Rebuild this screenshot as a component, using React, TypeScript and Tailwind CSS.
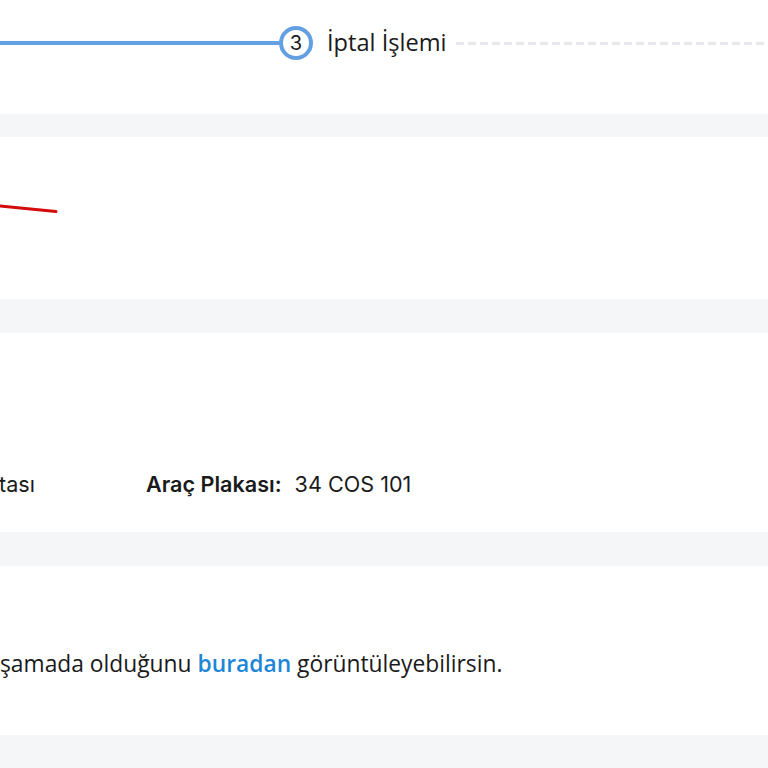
import React from "react";

const Band = ({ h }: { h: string }) => <div className={`${h} w-full bg-[#f5f6f8]`} />;

export default function App() {
  return (
    <div className="w-[768px] h-[768px] overflow-hidden bg-white font-['Inter',sans-serif] text-[#1a1a1a]">
      {/* Stepper */}
      <div className="h-[114px] pt-[26px]">
        <div className="flex items-center h-[34px]">
          <div className="w-[280px] h-[4px] bg-[#63a0e2]" />
          <div className="w-[34px] h-[34px] -ml-[1px] rounded-full border-4 border-[#63a0e2] bg-white flex items-center justify-center text-[20px] leading-none text-[#1a1a1a]">
            3
          </div>
          <span className="ml-[14px] text-[23.6px] leading-none text-[#1a1a1a] font-['Open_Sans',sans-serif]">İptal İşlemi</span>
          <div className="ml-[10px] flex-1 h-[3px] bg-[repeating-linear-gradient(90deg,#e6e8eb_0px,#e6e8eb_8px,transparent_8px,transparent_12px)]" />
        </div>
      </div>

      <Band h="h-[23px]" />

      {/* Signature area */}
      <div className="h-[162px] relative">
        <svg className="absolute left-0 top-[66px]" width="60" height="12" viewBox="0 0 60 12">
          <line x1="0" y1="3" x2="56" y2="8.5" stroke="#d40b0b" strokeWidth="3" strokeLinecap="round" />
        </svg>
      </div>

      <Band h="h-[34px]" />

      {/* Vehicle info */}
      <div className="h-[199px] flex items-end pb-[33px]">
        <div className="flex items-center text-[21.6px] leading-[30px] w-full">
          <span className="w-[147px] -ml-[1px]">tası</span>
          <span className="font-semibold">Araç Plakası:</span>
          <span className="ml-[13px]">34 COS 101</span>
        </div>
      </div>

      <Band h="h-[34px]" />

      {/* Info text */}
      <div className="h-[169px] flex items-end pb-[56px]">
        <p className="text-[22.8px] leading-[30px] whitespace-nowrap font-['Open_Sans',sans-serif]">
          şamada olduğunu <a className="font-semibold text-[#1e86d6]">buradan</a> görüntüleyebilirsin.
        </p>
      </div>

      <Band h="h-[40px]" />
    </div>
  );
}
